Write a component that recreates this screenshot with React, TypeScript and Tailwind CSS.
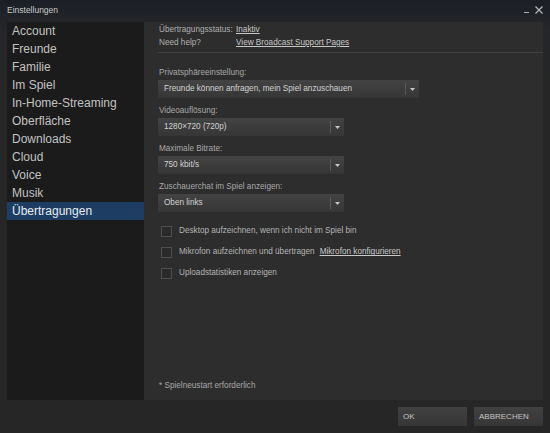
import React from 'react';

const navItems = [
  'Account',
  'Freunde',
  'Familie',
  'Im Spiel',
  'In-Home-Streaming',
  'Oberfläche',
  'Downloads',
  'Cloud',
  'Voice',
  'Musik',
  'Übertragungen',
];

const Dropdown = ({ value, wide }: { value: string; wide?: boolean }) => (
  <div
    className={`${wide ? 'w-[261px]' : 'w-[186px]'} h-[18px] flex items-center bg-gradient-to-b from-[#434343] to-[#363636] text-[#d2d2d2]`}
  >
    <span className="flex-1 pl-[6px] truncate">{value}</span>
    <div className="w-px h-[12px] bg-[#5a5a5a]" />
    <div className="w-[13px] flex justify-center">
      <svg width="5" height="3" viewBox="0 0 5 3">
        <path d="M0 0H5L2.5 3Z" fill="#c8c8c8" />
      </svg>
    </div>
  </div>
);

const Field = ({ label, value, wide }: { label: string; value: string; wide?: boolean }) => (
  <div className="mt-[7px] first:mt-0">
    <div className="h-[12px] leading-[12px] mb-[1px] pl-[1px] text-[#a8a8a8]">{label}</div>
    <Dropdown value={value} wide={wide} />
  </div>
);

const Check = ({ children }: { children: React.ReactNode }) => (
  <div className="h-[21px] flex items-center pl-[3px]">
    <div className="w-[11px] h-[11px] border border-[#4e4e4e] bg-[#2a2a2a]" />
    <div className="ml-[7px] text-[#b4b4b4] flex items-center">{children}</div>
  </div>
);

export default function App() {
  return (
    <div
      className="w-[550px] h-[433px] flex flex-col bg-[linear-gradient(to_bottom,#1b1f25_0px,#25262a_30px,#262626_90px)] text-[8.2px] select-none"
      style={{ fontFamily: '"Liberation Sans", Arial, sans-serif' }}
    >
      {/* title bar */}
      <div className="h-[22px] flex items-start justify-between pl-[7px] pr-[7px]">
        <span className="mt-[5px] leading-[10px] text-[8.5px] text-[#c8c8c8]">Einstellungen</span>
        <div className="flex items-start mt-[6px]">
          <div className="w-[5px] h-px bg-[#b0b0b0] mt-[6px]" />
          <svg className="ml-[6px]" width="8" height="8" viewBox="0 0 8 8">
            <path d="M0.5 0.5L7.5 7.5M7.5 0.5L0.5 7.5" stroke="#b8b8b8" strokeWidth="1.2" />
          </svg>
        </div>
      </div>

      {/* body */}
      <div className="h-[378px] flex px-[7px]">
        <div className="w-[137px] bg-[#1b1b1b] flex flex-col text-[12px]">
          {navItems.map((item) => (
            <div
              key={item}
              className={`h-[18px] leading-[18px] pl-[5px] ${
                item === 'Übertragungen' ? 'bg-[#1d3e62] text-[#e6ecf2]' : 'text-[#c2c2c2]'
              }`}
            >
              {item}
            </div>
          ))}
        </div>

        <div className="flex-1 bg-[#2d2d2d] flex flex-col pl-[14px] pt-[1px] pb-[8px]">
          <div className="grid grid-cols-[77px_1fr] leading-[13px] pl-[1px]">
            <span className="text-[#b0b0b0]">Übertragungsstatus:</span>
            <span className="text-[#c8c8c8] underline">Inaktiv</span>
            <span className="text-[#b0b0b0]">Need help?</span>
            <span className="text-[#c8c8c8] underline">View Broadcast Support Pages</span>
          </div>
          <div className="h-px bg-[#414141] mt-[3px]" />

          <div className="mt-[14px]">
            <Field label="Privatsphäreeinstellung:" value="Freunde können anfragen, mein Spiel anzuschauen" wide />
            <Field label="Videoauflösung:" value="1280×720 (720p)" />
            <Field label="Maximale Bitrate:" value="750 kbit/s" />
            <Field label="Zuschauerchat im Spiel anzeigen:" value="Oben links" />
          </div>

          <div className="mt-[9px]">
            <Check>Desktop aufzeichnen, wenn ich nicht im Spiel bin</Check>
            <Check>
              <span>Mikrofon aufzeichnen und übertragen</span>
              <span className="ml-[5px] text-[#c8c8c8] underline">Mikrofon konfigurieren</span>
            </Check>
            <Check>Uploadstatistiken anzeigen</Check>
          </div>

          <div className="mt-auto leading-[13px] pl-[1px] text-[#a8a8a8]">* Spielneustart erforderlich</div>
        </div>
      </div>

      {/* footer */}
      <div className="flex justify-end gap-[7px] pr-[7px] pt-[7px]">
        <button className="w-[69px] h-[19px] text-left pl-[5px] text-[8px] text-[#c4c4c4] bg-gradient-to-b from-[#414141] to-[#363636]">
          OK
        </button>
        <button className="w-[69px] h-[19px] text-left pl-[5px] text-[8px] text-[#c4c4c4] bg-gradient-to-b from-[#414141] to-[#363636]">
          ABBRECHEN
        </button>
      </div>
    </div>
  );
}
